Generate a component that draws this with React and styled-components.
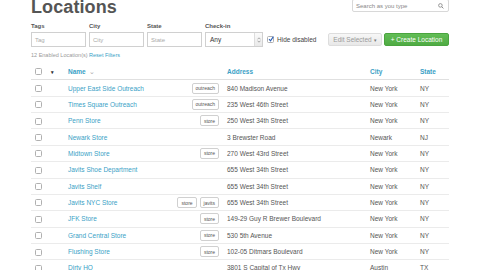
import React from 'react';
import styled, { createGlobalStyle } from 'styled-components';

const GlobalStyle = createGlobalStyle`
  html, body {
    margin: 0;
    padding: 0;
    background: #fff;
  }
  body {
    font-family: "Liberation Sans", Arial, sans-serif;
    color: #555;
    overflow: hidden;
  }
`;

const locations = [
  { name: 'Upper East Side Outreach', tags: ['outreach'], address: '840 Madison Avenue', city: 'New York', state: 'NY' },
  { name: 'Times Square Outreach', tags: ['outreach'], address: '235 West 46th Street', city: 'New York', state: 'NY' },
  { name: 'Penn Store', tags: ['store'], address: '250 West 34th Street', city: 'New York', state: 'NY' },
  { name: 'Newark Store', tags: [], address: '3 Brewster Road', city: 'Newark', state: 'NJ' },
  { name: 'Midtown Store', tags: ['store'], address: '270 West 43rd Street', city: 'New York', state: 'NY' },
  { name: 'Javits Shoe Department', tags: [], address: '655 West 34th Street', city: 'New York', state: 'NY' },
  { name: 'Javits Shelf', tags: [], address: '655 West 34th Street', city: 'New York', state: 'NY' },
  { name: 'Javits NYC Store', tags: ['store', 'javits'], address: '655 West 34th Street', city: 'New York', state: 'NY' },
  { name: 'JFK Store', tags: ['store'], address: '149-29 Guy R Brewer Boulevard', city: 'New York', state: 'NY' },
  { name: 'Grand Central Store', tags: ['store'], address: '530 5th Avenue', city: 'New York', state: 'NY' },
  { name: 'Flushing Store', tags: ['store'], address: '102-05 Ditmars Boulevard', city: 'New York', state: 'NY' },
  { name: 'Dirty HQ', tags: [], address: '3801 S Capital of Tx Hwy', city: 'Austin', state: 'TX' },
];

function App() {
  return (
    <Page>
      <GlobalStyle />
      <Header>
        <Title>Locations</Title>
        <Search>
          <span>Search as you type</span>
          <svg width="6" height="6" viewBox="0 0 10 10">
            <circle cx="4" cy="4" r="3" fill="none" stroke="#888" strokeWidth="1.4" />
            <path d="M6.2 6.2 L9 9" stroke="#888" strokeWidth="1.6" />
          </svg>
        </Search>
      </Header>

      <Filters>
        <Field>
          <Label>Tags</Label>
          <Input $w={55}>Tag</Input>
        </Field>
        <Field>
          <Label>City</Label>
          <Input $w={55}>City</Input>
        </Field>
        <Field>
          <Label>State</Label>
          <Input $w={55}>State</Input>
        </Field>
        <Field>
          <Label>Check-in</Label>
          <Select>
            <SelectValue>Any</SelectValue>
            <SelectArrow>
              <svg width="4" height="6" viewBox="0 0 4 6">
                <path d="M0.5 2.3 L2 0.8 L3.5 2.3 M0.5 3.7 L2 5.2 L3.5 3.7" fill="none" stroke="#777" strokeWidth="0.6" />
              </svg>
            </SelectArrow>
          </Select>
        </Field>
        <Check>
          <CheckBox>
            <svg width="6" height="6" viewBox="0 0 6 6">
              <path d="M1 3.2 L2.5 4.8 L5.4 0.6" fill="none" stroke="#2a5fb8" strokeWidth="1.1" />
            </svg>
          </CheckBox>
          Hide disabled
        </Check>
        <Actions>
          <Button>Edit Selected <Caret>▾</Caret></Button>
          <Button $primary>+ Create Location</Button>
        </Actions>
      </Filters>

      <Count>
        12 Enabled Location(s) <Link>Reset Filters</Link>
      </Count>

      <Table>
        <colgroup>
          <col style={{ width: 33 }} />
          <col style={{ width: 159 }} />
          <col style={{ width: 143 }} />
          <col style={{ width: 50 }} />
          <col style={{ width: 33 }} />
        </colgroup>
        <thead>
          <tr>
            <Th>
              <SelectAll>
                <CheckBox />
                <Caret $dark>▾</Caret>
              </SelectAll>
            </Th>
            <Th>
              Name <Chevron>⌄</Chevron>
            </Th>
            <Th>Address</Th>
            <Th>City</Th>
            <Th>State</Th>
          </tr>
        </thead>
        <tbody>
          {locations.map(loc => (
            <tr key={loc.name}>
              <Td>
                <CheckBox />
              </Td>
              <Td>
                <NameCell>
                  <Link>{loc.name}</Link>
                  <Tags>
                    {loc.tags.map(t => (
                      <Tag key={t}>{t}</Tag>
                    ))}
                  </Tags>
                </NameCell>
              </Td>
              <Td>{loc.address}</Td>
              <Td>{loc.city}</Td>
              <Td>{loc.state}</Td>
            </tr>
          ))}
        </tbody>
      </Table>
    </Page>
  );
}

const Page = styled.div`
  width: 480px;
  height: 270px;
  padding: 0 31px;
  box-sizing: border-box;
  overflow: hidden;
`;

const Header = styled.div`
  display: flex;
  justify-content: space-between;
  align-items: flex-start;
  height: 20px;
`;

const Title = styled.h1`
  margin: -2px 0 0;
  font-size: 18px;
  line-height: 18px;
  font-weight: bold;
  letter-spacing: 0.1px;
  color: #555;
`;

const Search = styled.div`
  display: flex;
  align-items: center;
  justify-content: space-between;
  width: 97px;
  height: 13px;
  margin-top: -1px;
  padding: 0 4px 0 3px;
  box-sizing: border-box;
  border: 1px solid #d8d8d8;
  border-radius: 2px;
  font-size: 6px;
  color: #888;
`;

const Filters = styled.div`
  display: flex;
  align-items: flex-end;
  gap: 3px;
  margin-top: 2px;
`;

const Field = styled.div`
  display: flex;
  flex-direction: column;
`;

const Label = styled.div`
  font-size: 6px;
  line-height: 8px;
  font-weight: bold;
  color: #555;
  margin-bottom: 2px;
`;

const Input = styled.div`
  width: ${p => p.$w}px;
  height: 15px;
  box-sizing: border-box;
  border: 1px solid #d0d0d0;
  padding: 0 3px;
  display: flex;
  align-items: center;
  font-size: 6px;
  color: #aaa;
`;

const Select = styled.div`
  width: 58px;
  height: 15px;
  box-sizing: border-box;
  border: 1px solid #d0d0d0;
  background: #fff;
  display: flex;
  align-items: stretch;
  font-size: 6.5px;
  color: #333;
`;

const SelectValue = styled.div`
  flex: 1;
  display: flex;
  align-items: center;
  padding-left: 4px;
  background: #fff;
`;

const SelectArrow = styled.div`
  width: 7px;
  display: flex;
  align-items: center;
  justify-content: center;
  background: linear-gradient(#fbfbfb, #e9e9e9);
  border-left: 1px solid #ddd;
`;

const Check = styled.label`
  display: flex;
  align-items: center;
  gap: 3px;
  height: 15px;
  margin-left: 1px;
  white-space: nowrap;
  font-size: 6.5px;
  color: #444;
`;

const CheckBox = styled.span`
  position: relative;
  display: inline-flex;
  align-items: center;
  justify-content: center;
  width: 5px;
  height: 5px;
  border: 0.6px solid #b0b0b0;
  border-radius: 1.5px;
  background: #fff;
  vertical-align: middle;

  svg {
    position: absolute;
    left: 0;
    top: -1px;
  }
`;

const Actions = styled.div`
  display: flex;
  gap: 2px;
  margin-left: auto;
  padding-bottom: 1px;
`;

const Button = styled.div`
  height: 13px;
  box-sizing: border-box;
  display: flex;
  align-items: center;
  justify-content: center;
  white-space: nowrap;
  padding: 0;
  border-radius: 2px;
  font-size: 6.5px;
  border: 1px solid ${p => (p.$primary ? '#4aa43f' : '#ddd')};
  background: ${p => (p.$primary ? 'linear-gradient(#62bd55, #4fab44)' : 'linear-gradient(#f7f7f7, #e8e8e8)')};
  color: ${p => (p.$primary ? '#fff' : '#999')};
  width: ${p => (p.$primary ? 65 : 54)}px;
`;

const Caret = styled.span`
  font-size: 5px;
  margin-left: 2px;
  color: ${p => (p.$dark ? '#333' : '#777')};
`;

const Count = styled.div`
  margin-top: 4px;
  font-size: 5.5px;
  line-height: 8px;
  color: #999;
`;

const Link = styled.span`
  color: #3a9fc6;
`;

const Table = styled.table`
  margin-top: 5px;
  width: 418px;
  table-layout: fixed;
  border-collapse: collapse;
  font-size: 6.5px;
  color: #555;
`;

const Th = styled.th`
  height: 15.36px;
  padding: 0 4px;
  text-align: left;
  font-weight: bold;
  color: #3a9fc6;
  border-bottom: 1px solid #e0e0e0;
  vertical-align: middle;
`;

const Td = styled.td`
  height: 15.36px;
  padding: 0 4px;
  border-bottom: 1px solid #ebebeb;
  vertical-align: middle;
  white-space: nowrap;
  overflow: hidden;
`;

const SelectAll = styled.div`
  display: flex;
  align-items: center;
  gap: 7px;
`;

const Chevron = styled.span`
  font-weight: normal;
  color: #aaa;
  margin-left: 1px;
`;

const NameCell = styled.div`
  display: flex;
  align-items: center;
  justify-content: space-between;
`;

const Tags = styled.div`
  display: flex;
  gap: 3px;
`;

const Tag = styled.span`
  display: inline-flex;
  align-items: center;
  height: 9px;
  padding: 0 3px;
  border: 1px solid #d0d0d0;
  border-radius: 2px;
  font-size: 5px;
  color: #555;
`;

export default App;
